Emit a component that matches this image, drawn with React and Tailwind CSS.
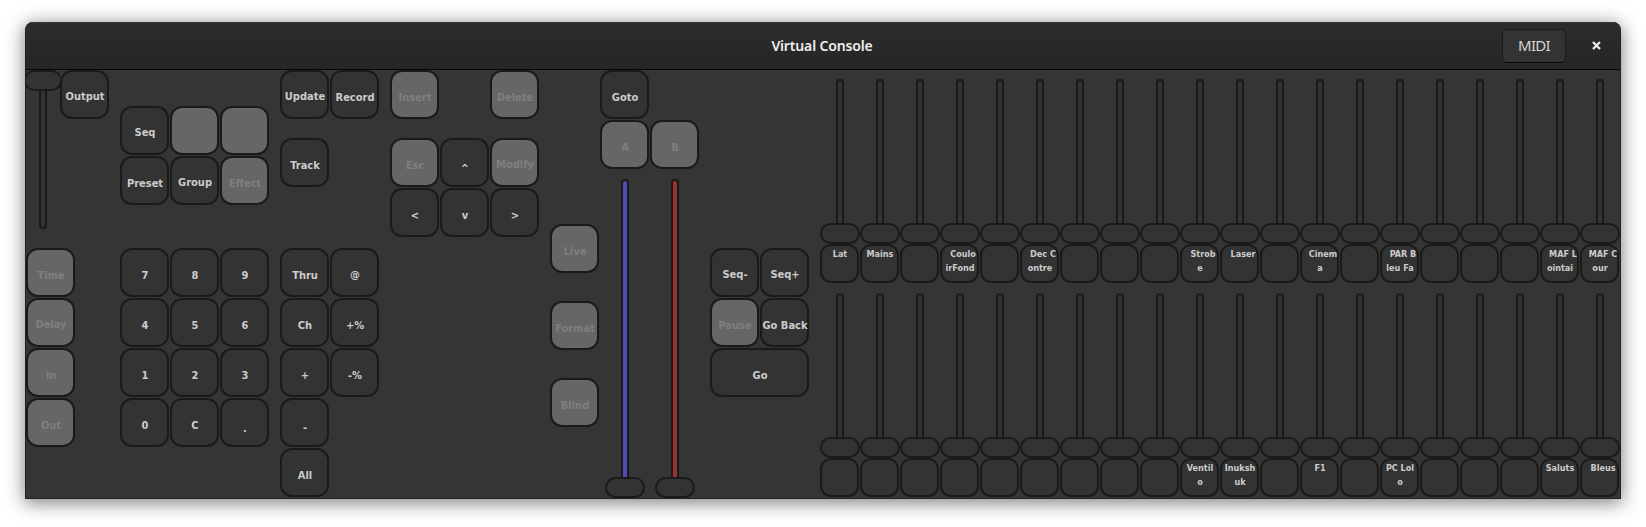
const BUTTON = "flex h-[49px] shrink-0 items-center justify-center rounded-[12px] border-2 border-[#1a1a1a] whitespace-nowrap text-[11px] font-bold leading-none";

function Key({ label = "", off = false, wide = false, dy = 0 }) {
  return (
    <button
      className={`${BUTTON} ${wide ? "w-[99px]" : "w-[49px]"} ${off ? "bg-[#666666] text-[#7f7f7f]" : "bg-[#333333] text-[#cccccc]"}`}
    >
      <span style={{ transform: `translate(0.5px, ${dy + 2}px)` }}>{label}</span>
    </button>
  );
}

function Gap() {
  return <div className="h-[49px] w-[49px] shrink-0" />;
}

function Keys({ rows, className = "" }) {
  return (
    <div className={`flex flex-col gap-px ${className}`}>
      {rows.map((row, i) => (
        <div key={i} className="flex gap-px">
          {row.map((k, j) => (k ? <Key key={j} {...k} /> : <Gap key={j} />))}
        </div>
      ))}
    </div>
  );
}

const on = (label, dy = 1) => ({ label, dy });
const off = (label, dy = 1) => ({ label, dy, off: true });

function Cross({ fill }) {
  return (
    <div className="flex w-10 flex-col items-center">
      <div className={`h-[298px] w-2 rounded-t-[4px] border-2 border-b-0 border-[#1a1a1a] ${fill}`} />
      <div className="h-[21px] w-10 rounded-full border-2 border-[#1a1a1a] bg-[#333333]" />
    </div>
  );
}

function Fader({ lines = [] }) {
  return (
    <div className="flex w-10 flex-col">
      <div className="ml-4 h-[144px] w-2 rounded-t-[4px] border-2 border-b-0 border-[#1a1a1a] bg-[#333333]" />
      <div className="h-[21px] w-[39.5px] rounded-full border-2 border-[#1a1a1a] bg-[#333333]" />
      <div className="h-[39px] w-[39px] rounded-[11px] border-2 border-[#1a1a1a] bg-[#333333] pt-px text-center text-[9px] leading-[14px] font-bold text-[#cccccc]">
        {lines.map(([text, dx], i) => (
          <div key={i} className="flex justify-center whitespace-nowrap">
            <span style={{ transform: `translateX(${dx + 0.5}px)` }}>{text}</span>
          </div>
        ))}
      </div>
    </div>
  );
}

const TOP = [
  [["Lat", 0]], [["Mains", 0]], [], [["Coulo", 3], ["irFond", 0]], [], [["Dec C", 3], ["ontre", 0]],
  [], [], [], [["Strob", 3], ["e", 0]], [["Laser", 3]], [], [["Cinem", 3], ["a", 0]], [],
  [["PAR B", 3], ["leu Fa", 0]], [], [], [], [["MAF L", 3], ["ointai", 0]], [["MAF C", 3], ["our", 0]],
];
const BOTTOM = [
  [], [], [], [], [], [], [], [], [], [["Ventil", 0], ["o", 0]], [["Inuksh", 0], ["uk", 0]], [],
  [["F1", 0]], [], [["PC Lol", 0], ["o", 0]], [], [], [], [["Saluts", 0]], [["Bleus", 3]],
];

export default function App() {
  return (
    <div className="h-[527px] w-[1646px] overflow-hidden bg-white pt-[22px] pl-[25px] font-['DejaVu_Sans_Condensed','DejaVu_Sans',sans-serif] [font-stretch:condensed]">
      <div className="flex h-[477px] w-[1596px] flex-col overflow-hidden rounded-t-[8px] border border-t-0 border-[#232323] bg-[#353535] shadow-[0_3px_18px_1px_rgba(0,0,0,0.5)]">
        <header className="flex h-12 shrink-0 items-center border-b border-[#070707] bg-linear-to-b from-[#2c2c2c] to-[#262626] shadow-[inset_0_1px_0_#383838] font-['Noto_Sans',sans-serif] [font-stretch:normal]">
          <div className="w-[158px]" />
          <h1 className="flex-1 text-center text-[14px] font-semibold tracking-[-0.15px] text-[#eeeeec]">Virtual Console</h1>
          <div className="flex w-[160px] items-center pl-[42px]">
            <button className="h-[34px] w-[64px] rounded-[5px] border border-[#1b1b1b] border-b-[#070707] bg-[#333333] text-[15px] tracking-[-0.7px] text-[#d6d6d4]">MIDI</button>
            <svg className="ml-[26px]" width="9" height="9" viewBox="0 0 9 9">
              <path d="M1 1 L8 8 M8 1 L1 8" stroke="#eeeeec" strokeWidth="2.2" />
            </svg>
          </div>
        </header>
        <main className="flex h-[428px] shrink-0">
          <section className="flex w-[94px] flex-col">
            <div className="flex h-[178px]">
              <div className="flex w-[34px] flex-col items-center overflow-hidden">
                <div className="h-[21px] w-[38px] shrink-0 rounded-[10px] border-2 border-[#1a1a1a] bg-[#333333]" />
                <div className="h-[138px] w-2 rounded-b-[4px] border-2 border-t-0 border-[#1a1a1a] bg-[#333333]" />
              </div>
              <Key label="Output" />
            </div>
            <Keys rows={[[off("Time")], [off("Delay", 0)], [off("In")], [off("Out")]]} />
          </section>
          <section className="flex w-[160px] flex-col pt-[36px]">
            <Keys className="h-[142px]" rows={[[on("Seq", 0), off(""), off("")], [on("Preset"), on("Group", 0), off("Effect")]]} />
            <Keys rows={[[on("7"), on("8"), on("9")], [on("4"), on("5"), on("6")], [on("1"), on("2"), on("3")], [on("0"), on("C"), on(".", 4)]]} />
          </section>
          <section className="flex w-[110px] flex-col">
            <Keys className="h-[68px]" rows={[[on("Update", 0), on("Record")]]} />
            <Keys className="h-[110px]" rows={[[on("Track")]]} />
            <Keys rows={[[on("Thru"), on("@", 0)], [on("Ch"), on("+%")], [on("+"), on("-%")], [on("-", 3)], [on("All")]]} />
          </section>
          <section className="flex w-[160px] flex-col">
            <Keys className="h-[68px]" rows={[[off("Insert"), null, off("Delete")]]} />
            <Keys rows={[[off("Esc"), on("^", 4), off("Modify", 0)], [on("<"), on("v"), on(">")]]} />
          </section>
          <section className="flex w-[50px] flex-col gap-7 pt-[154px]">
            <Key {...off("Live")} />
            <Key {...off("Format")} />
            <Key {...off("Blind")} />
          </section>
          <section className="flex w-[110px] flex-col">
            <Keys rows={[[on("Goto")], [off("A"), off("B")]]} />
            <div className="mt-[10px] flex gap-[10px] pl-[5px]">
              <Cross fill="bg-[#4d4db3]" />
              <Cross fill="bg-[#993333]" />
            </div>
          </section>
          <section className="flex w-[110px] flex-col pt-[178px]">
            <Keys rows={[[on("Seq-", 0), on("Seq+", 0)], [off("Pause"), on("Go Back")], [{ label: "Go", wide: true, dy: 1 }]]} />
          </section>
          <section className="flex w-[800px] flex-col gap-[10px] pt-[9px]">
            <div className="flex">{TOP.map((l, i) => <Fader key={i} lines={l} />)}</div>
            <div className="flex">{BOTTOM.map((l, i) => <Fader key={i} lines={l} />)}</div>
          </section>
        </main>
      </div>
    </div>
  );
}
